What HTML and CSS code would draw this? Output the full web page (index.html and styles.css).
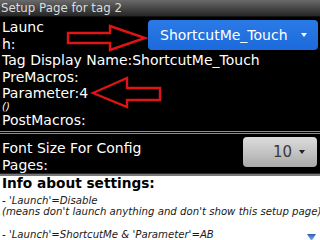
FILE: index.html
```html
<!DOCTYPE html>
<html>
<head>
<meta charset="utf-8">
<link rel="stylesheet" href="styles.css">
</head>
<body>
<div class="screen">
  <div class="titlebar">Setup Page for tag 2</div>
  <div class="dark">
    <div class="row-launch">
      <div class="label-launch">Launch:</div>
      <div class="btn-blue"><span>ShortcutMe_Touch</span><span class="tri tri-white"></span></div>
    </div>
    <div class="line">Tag Display Name:ShortcutMe_Touch</div>
    <div class="line">PreMacros:</div>
    <div class="line">Parameter:4</div>
    <div class="small">()</div>
    <div class="line">PostMacros:</div>
    <div class="sep-double"></div>
    <div class="row-font">
      <div class="label-font">Font Size For Config Pages:</div>
      <div class="btn-gray"><span>10</span><span class="tri tri-dark"></span></div>
    </div>
  </div>
  <div class="sep-bottom"></div>
  <div class="info">
    <div class="info-title">Info about settings:</div>
    <div class="info-text">
      <div>- 'Launch'=Disable</div>
      <div>(means don't launch anything and don't show this setup page)</div>
      <div class="blank"></div>
      <div>- 'Launch'=ShortcutMe &amp; 'Parameter'=AB</div>
      <div>'(Means launch ShortcutMe with launch subpart AB in ShortcutMe)</div>
    </div>
  </div>
  <svg class="overlay" width="320" height="240" viewBox="0 0 320 240">
    <polygon points="68,33 110,33 110,26 145,38 110,50 110,43 68,43" fill="none" stroke="#e01414" stroke-width="2.4" stroke-linejoin="miter"/>
    <polygon points="93,93 127,78 127,88 160,88 160,100 127,100 127,107" fill="none" stroke="#e01414" stroke-width="2.4" stroke-linejoin="miter"/>
    <defs>
      <linearGradient id="sb" x1="0" y1="0" x2="0" y2="1">
        <stop offset="0" stop-color="#2a5fb8"/>
        <stop offset="1" stop-color="#8fb6ee"/>
      </linearGradient>
    </defs>
    <polygon points="307,234 316,234 311.5,241" fill="url(#sb)"/>
  </svg>
</div>
</body>
</html>
```

FILE: styles.css
```css
html, body {
  margin: 0;
  padding: 0;
  background: #000;
}
.screen {
  position: relative;
  width: 320px;
  height: 240px;
  overflow: hidden;
  background: #000;
  font-family: "DejaVu Sans", "Liberation Sans", sans-serif;
}
.titlebar {
  height: 17px;
  line-height: 16px;
  font-size: 11.8px;
  color: #dcdcdc;
  padding-left: 1px;
  background: linear-gradient(to bottom, #6a6a6a 0%, #4a4a4a 45%, #262626 100%);
  border-bottom: 1px solid #111;
  box-sizing: border-box;
}
.dark {
  color: #fff;
  font-size: 14px;
  padding: 2px 0 0 2px;
}
.row-launch {
  display: flex;
  align-items: flex-start;
}
.label-launch {
  width: 46px;
  word-break: break-all;
  line-height: 16.5px;
}
.btn-blue {
  margin-left: auto;
  margin-right: 2px;
  margin-top: 1px;
  width: 170px;
  height: 30px;
  box-sizing: border-box;
  border-radius: 4px;
  background: linear-gradient(to bottom, #2a7ae6 0%, #1c6adb 100%);
  color: #fff;
  display: flex;
  align-items: center;
  padding-left: 12px;
  font-size: 14px;
}
.tri {
  width: 0;
  height: 0;
  border-left: 3.5px solid transparent;
  border-right: 3.5px solid transparent;
  margin-left: auto;
}
.tri-white {
  border-top: 4px solid #fff;
  margin-right: 11px;
}
.tri-dark {
  border-top: 4px solid #222;
  margin-left: 7px;
}
.line {
  line-height: 16.5px;
  white-space: nowrap;
}
.small {
  font-size: 10px;
  font-style: italic;
  line-height: 10.5px;
}
.sep-double {
  margin: 2.5px 0 0 -2px;
  height: 1px;
  border-top: 1px solid #8c8c8c;
  border-bottom: 1px solid #8c8c8c;
}
.row-font {
  display: flex;
  align-items: flex-start;
  height: 39px;
}
.label-font {
  width: 170px;
  margin-top: 6px;
  line-height: 16.5px;
}
.btn-gray {
  margin-left: auto;
  margin-right: 3px;
  margin-top: 3px;
  width: 74px;
  height: 30px;
  box-sizing: border-box;
  border-radius: 4px;
  background: linear-gradient(to bottom, #dcdcdc 0%, #c4c4c4 50%, #a9a9a9 100%);
  color: #3a3a3a;
  display: flex;
  align-items: center;
  justify-content: flex-end;
  padding-right: 12px;
  font-size: 15px;
}
.sep-bottom {
  height: 2px;
  background: #777;
  border-top: 1px solid #2a2a2a;
}
.info {
  background: #fff;
  color: #000;
  padding-left: 2px;
  height: 80px;
}
.info-title {
  font-size: 13.7px;
  font-weight: bold;
  line-height: 15px;
}
.info-text {
  margin-top: 4px;
  font-family: "DejaVu Sans Condensed", "DejaVu Sans", sans-serif;
  font-style: italic;
  font-size: 11.3px;
  line-height: 11.3px;
  color: #1a1a1a;
  white-space: nowrap;
}
.blank {
  height: 11.3px;
}
.overlay {
  position: absolute;
  left: 0;
  top: 0;
  pointer-events: none;
}
```
